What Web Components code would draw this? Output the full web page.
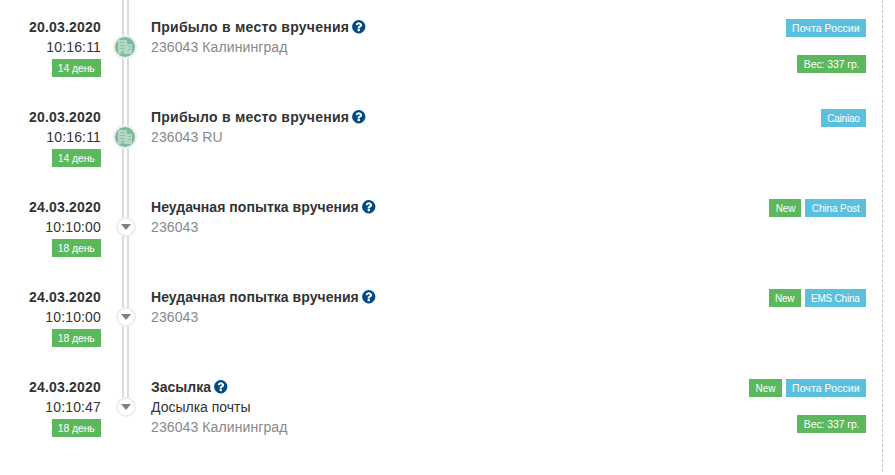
<!DOCTYPE html>
<html>
<head>
<meta charset="utf-8">
<style>
    html, body { margin: 0; background: #fff; }
    body { font-family: "Liberation Sans", Arial, sans-serif; font-size: 14px; line-height: 20px; color: #333; }
</style>
</head>
<body>
<track-list>
    <track-event date="20.03.2020" time="10:16:11" days="14 день" title="Прибыло в место вручения" spacing=".25" place="236043 Калининград" icon="building">
        <track-tag slot="tags" kind="info" style="letter-spacing:.08px">Почта России</track-tag>
        <track-tag slot="weight" kind="success" style="letter-spacing:-.08px">Вес: 337 гр.</track-tag>
    </track-event>
    <track-event date="20.03.2020" time="10:16:11" days="14 день" title="Прибыло в место вручения" spacing=".25" place="236043 RU" icon="building">
        <track-tag slot="tags" kind="info" style="font-size:10px;line-height:19px;letter-spacing:-.2px">Cainiao</track-tag>
    </track-event>
    <track-event date="24.03.2020" time="10:10:00" days="18 день" title="Неудачная попытка вручения" spacing=".04" place="236043">
        <track-tag slot="tags" kind="success" style="font-size:10px;line-height:19px;letter-spacing:-.2px">New</track-tag>
        <track-tag slot="tags" kind="info" style="font-size:10px;line-height:19px;letter-spacing:-.1px">China Post</track-tag>
    </track-event>
    <track-event date="24.03.2020" time="10:10:00" days="18 день" title="Неудачная попытка вручения" spacing=".04" place="236043">
        <track-tag slot="tags" kind="success" style="font-size:10px;line-height:19px;letter-spacing:-.2px">New</track-tag>
        <track-tag slot="tags" kind="info" style="font-size:10px;line-height:19px;letter-spacing:-.2px">EMS China</track-tag>
    </track-event>
    <track-event last date="24.03.2020" time="10:10:47" days="18 день" title="Засылка" note="Досылка почты" place="236043 Калининград">
        <track-tag slot="tags" kind="success" style="font-size:10px;line-height:19px">New</track-tag>
        <track-tag slot="tags" kind="info" style="letter-spacing:.08px">Почта России</track-tag>
        <track-tag slot="weight" kind="success" style="letter-spacing:-.08px">Вес: 337 гр.</track-tag>
    </track-event>
</track-list>

<script>
class TrackList extends HTMLElement {
    connectedCallback() {
        this.attachShadow({ mode: 'open' });
        this.shadowRoot.innerHTML = `
            <style>
                :host {
                    display: block;
                    width: 882px;
                    height: 472px;
                    border-right: 1px dashed #c4c4c4;
                }
            </style>
            <slot></slot>
        `;
    }
}

class TrackTag extends HTMLElement {
    connectedCallback() {
        this.attachShadow({ mode: 'open' });
        const bg = this.getAttribute('kind') === 'info' ? '#5bc0de' : '#5cb85c';
        this.shadowRoot.innerHTML = `
            <style>
                :host {
                    display: inline-block;
                    height: 18px;
                    padding: 0 6.3px;
                    background: ${bg};
                    color: #fff;
                    font-size: 10.5px;
                    line-height: 18px;
                    white-space: nowrap;
                }
            </style>
            <slot></slot>
        `;
    }
}

class TrackEvent extends HTMLElement {
    connectedCallback() {
        this.attachShadow({ mode: 'open' });
        const attr = name => this.getAttribute(name) || '';
        const building = `
            <svg width="16" height="14" viewBox="0 0 16 14">
                <path fill="#b6d5c5" d="M1 0h9v14H1z"/>
                <path fill="#b6d5c5" d="M10 4h5v10h-5z"/>
                <path fill="#8fc2a8" d="M3 2h5v1H3zM3 5h5v1H3zM3 8h5v1H3zM4 11h3v3H4zM11 6h3v1h-3zM11 9h3v1h-3z"/>
            </svg>`;
        const caret = `
            <svg width="10" height="6" viewBox="0 0 10 6"><path fill="#808080" d="M0 0h10L5 6z"/></svg>`;
        const isBuilding = attr('icon') === 'building';
        const dotSize = isBuilding ? 24 : 20;
        this.shadowRoot.innerHTML = `
            <style>
                :host {
                    display: grid;
                    grid-template-columns: 101px 50px 1fr auto;
                    height: 90px;
                    box-sizing: border-box;
                    padding: 17px 16px 0 0;
                }
                .when { text-align: right; }
                .date { font-weight: bold; letter-spacing: .2px; }
                .time { letter-spacing: .15px; }
                .days {
                    display: inline-block;
                    margin-top: 2px;
                    vertical-align: top;
                    letter-spacing: -.14px;
                }
                .rail {
                    position: relative;
                    margin: -17px 0 0 21px;
                    width: 3px;
                    height: 90px;
                    border: solid #d9dde0;
                    border-width: 0 2px;
                }
                :host([last]) .rail { height: 40px; }
                .dot {
                    position: absolute;
                    left: ${isBuilding ? -11 : -8}px;
                    top: ${isBuilding ? 35 : 37}px;
                    width: ${dotSize}px;
                    height: ${dotSize}px;
                    box-sizing: border-box;
                    border: 2px solid #eee;
                    border-radius: 50%;
                    background: ${isBuilding ? '#7fb99b' : '#fff'};
                    display: flex;
                    align-items: center;
                    justify-content: center;
                }
                .title {
                    font-weight: bold;
                    display: flex;
                    align-items: center;
                    gap: 2px;
                    letter-spacing: ${attr('spacing') || 0}px;
                }
                .place { color: #888; letter-spacing: .1px; }
                .side { text-align: right; }
                .tags { display: flex; justify-content: flex-end; gap: 4px; margin-top: 2px; }
                .weight { display: flex; justify-content: flex-end; margin-top: 18px; }
            </style>
            <div class="when">
                <div class="date">${attr('date')}</div>
                <div class="time">${attr('time')}</div>
                <track-tag class="days" kind="success">${attr('days')}</track-tag>
            </div>
            <div class="rail"><div class="dot">${isBuilding ? building : caret}</div></div>
            <div class="body">
                <div class="title">${attr('title')}
                    <svg width="15.5" height="15.5" viewBox="0 0 1792 1792"><path fill="#004b85" d="M1024 1376v-192q0-14-9-23t-23-9h-192q-14 0-23 9t-9 23v192q0 14 9 23t23 9h192q14 0 23-9t9-23zm256-672q0-88-55.5-163t-138.5-116-170-41q-243 0-371 213-15 24 8 42l132 100q7 6 19 6 16 0 25-12 53-68 86-92 34-24 86-24 48 0 85.5 26t37.5 59q0 38-20 61t-68 45q-63 28-115.5 86.5t-52.5 125.5v36q0 14 9 23t23 9h192q14 0 23-9t9-23q0-19 21.5-49.5t54.5-49.5q32-18 49-28.5t46-35 44.5-48 28-60.5 12.5-81zm384 192q0 209-103 385.5t-279.5 279.5-385.5 103-385.5-103-279.5-279.5-103-385.5 103-385.5 279.5-279.5 385.5-103 385.5 103 279.5 279.5 103 385.5z"/></svg>
                </div>
                ${attr('note') ? `<div>${attr('note')}</div>` : ''}
                <div class="place">${attr('place')}</div>
            </div>
            <div class="side">
                <div class="tags"><slot name="tags"></slot></div>
                <div class="weight"><slot name="weight"></slot></div>
            </div>
        `;
    }
}

customElements.define('track-tag', TrackTag);
customElements.define('track-event', TrackEvent);
customElements.define('track-list', TrackList);
</script>
</body>
</html>
